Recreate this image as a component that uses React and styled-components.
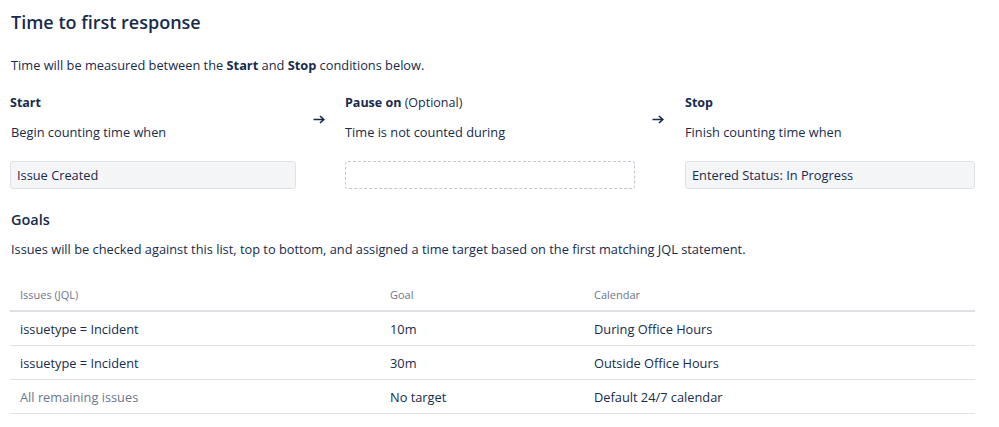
import React from 'react';
import styled, { createGlobalStyle } from 'styled-components';

const GlobalStyle = createGlobalStyle`
  body {
    margin: 0;
    background: #fff;
    font-family: "Open Sans", "Noto Sans", sans-serif;
    color: #172b4d;
  }
`;

const Page = styled.div`
  padding: 9px 24px 0 10px;
`;

const Title = styled.h1`
  margin: 0 0 0 1px;
  font-size: 18px;
  font-weight: 600;
  line-height: 26px;
`;

const Text = styled.p`
  margin: ${p => p.$m || '0'};
  font-size: 12.8px;
  line-height: 18px;
  color: ${p => p.$muted ? '#6b778c' : '#172b4d'};
  b { font-weight: 700; }
`;

const Conditions = styled.div`
  display: grid;
  grid-template-columns: 286px 49px 290px 50px 290px;
  margin-top: 20px;
`;

const Column = styled.div`
  display: flex;
  flex-direction: column;
`;

const Label = styled.div`
  font-size: 12.5px;
  line-height: 18px;
  font-weight: 700;
  span { font-weight: 400; }
`;

const Arrow = styled.div`
  padding: 21px 0 0 17px;
  svg { display: block; }
`;

const Field = styled.div`
  margin-top: 20px;
  height: 28px;
  box-sizing: border-box;
  padding: 0 6px;
  display: flex;
  align-items: center;
  font-size: 12.8px;
  background: ${p => p.$empty ? '#fff' : '#f4f5f7'};
  border: 1px ${p => p.$empty ? 'dashed' : 'solid'} ${p => p.$empty ? '#c1c7d0' : '#dfe1e6'};
  border-radius: 3px;
`;

const SectionTitle = styled.h2`
  margin: 21px 0 0 1px;
  font-size: 14.5px;
  font-weight: 600;
  line-height: 20px;
`;

const Table = styled.table`
  margin-top: 16px;
  width: 965px;
  border-collapse: collapse;
  font-size: 12.8px;
`;

const Th = styled.th`
  text-align: left;
  font-weight: 400;
  font-size: 11px;
  color: #6b778c;
  padding: 0 10px 8px;
  height: 28px;
  vertical-align: bottom;
  border-bottom: 2px solid #dfe1e6;
  width: ${p => p.$w || 'auto'};
`;

const Td = styled.td`
  padding: 0 10px;
  height: 33px;
  border-bottom: 1px solid #dfe1e6;
  color: ${p => p.$muted ? '#6b778c' : '#172b4d'};
`;

const goals = [
  { jql: 'issuetype = Incident', goal: '10m', calendar: 'During Office Hours' },
  { jql: 'issuetype = Incident', goal: '30m', calendar: 'Outside Office Hours' },
  { jql: 'All remaining issues', goal: 'No target', calendar: 'Default 24/7 calendar', muted: true },
];

const ArrowIcon = () => (
  <svg width="12" height="9" viewBox="0 0 12 9">
    <path d="M0.5 4.5H10.5M7 1L10.8 4.5L7 8" fill="none" stroke="#172b4d" strokeWidth="1.6" />
  </svg>
);

export default function App() {
  return (
    <Page>
      <GlobalStyle />
      <Title>Time to first response</Title>
      <Text $m="21px 0 0 1px">
        Time will be measured between the <b>Start</b> and <b>Stop</b> conditions below.
      </Text>
      <Conditions>
        <Column>
          <Label>Start</Label>
          <Text $m="11px 0 0 1px">Begin counting time when</Text>
          <Field>Issue Created</Field>
        </Column>
        <Arrow><ArrowIcon /></Arrow>
        <Column>
          <Label>Pause on <span>(Optional)</span></Label>
          <Text $m="11px 0 0 0">Time is not counted during</Text>
          <Field $empty />
        </Column>
        <Arrow><ArrowIcon /></Arrow>
        <Column>
          <Label>Stop</Label>
          <Text $m="11px 0 0 0">Finish counting time when</Text>
          <Field>Entered Status: In Progress</Field>
        </Column>
      </Conditions>
      <SectionTitle>Goals</SectionTitle>
      <Text $m="10px 0 0 1px">
        Issues will be checked against this list, top to bottom, and assigned a time target based on the first matching JQL statement.
      </Text>
      <Table>
        <thead>
          <tr>
            <Th $w="350px">Issues (JQL)</Th>
            <Th $w="184px">Goal</Th>
            <Th>Calendar</Th>
          </tr>
        </thead>
        <tbody>
          {goals.map((g, i) => (
            <tr key={i}>
              <Td $muted={g.muted}>{g.jql}</Td>
              <Td>{g.goal}</Td>
              <Td>{g.calendar}</Td>
            </tr>
          ))}
        </tbody>
      </Table>
    </Page>
  );
}
